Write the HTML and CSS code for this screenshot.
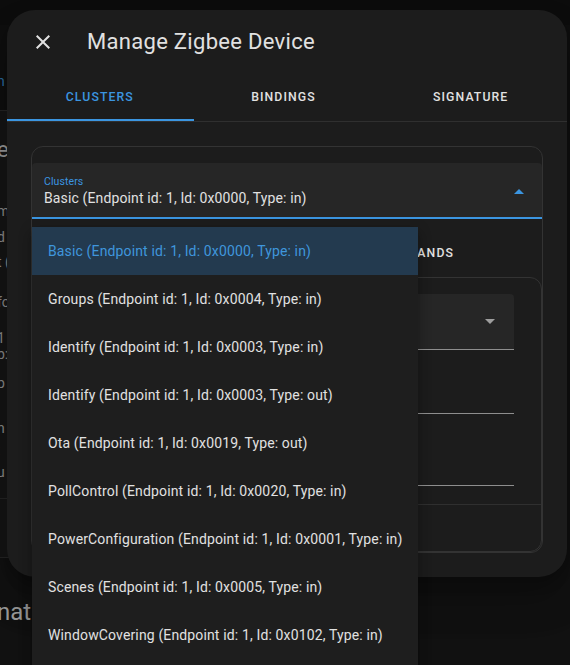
FILE: index.html
```html
<!DOCTYPE html>
<html lang="en">
<head>
<meta charset="utf-8">
<title>Manage Zigbee Device</title>
<link rel="stylesheet" href="styles.css">
</head>
<body>
<div class="page">
  <div class="page-top"></div>
  <div class="page-sub"><span class="page-link">n</span></div>
  <div class="page-col">
    <div class="page-card">
      <div class="pc-head">e</div>
      <div class="pc-lines">
        <div class="pl">m</div>
        <div class="pl">d</div>
        <div class="pl">t (</div>
        <div class="pl">fo</div>
        <div class="pl">1</div>
        <div class="pl">b:</div>
        <div class="pl">p</div>
        <div class="pl">n</div>
        <div class="pl">:</div>
        <div class="pl">u</div>
      </div>
      <div class="pc-actions"><span class="page-link">l</span></div>
    </div>
    <div class="page-heading">nati</div>
  </div>
</div>

<div class="dialog">
  <div class="dlg-header">
    <svg class="close-icon" viewBox="0 0 24 24" width="24" height="24"><path d="M19,6.41L17.59,5L12,10.59L6.41,5L5,6.41L10.59,12L5,17.59L6.41,19L12,13.41L17.59,19L19,17.59L13.41,12L19,6.41Z"/></svg>
    <h2 class="dlg-title">Manage Zigbee Device</h2>
  </div>
  <div class="tabs">
    <div class="tab active">Clusters</div>
    <div class="tab">Bindings</div>
    <div class="tab">Signature</div>
  </div>
  <div class="dlg-content">
    <div class="card">
      <div class="select open">
        <div class="sel-text">
          <div class="sel-label">Clusters</div>
          <div class="sel-value">Basic (Endpoint id: 1, Id: 0x0000, Type: in)</div>
        </div>
        <svg class="sel-arrow" viewBox="0 0 10 5" width="10" height="5"><path d="M0 5 L5 0 L10 5 Z"/></svg>
      </div>
      <div class="subtabs">
        <div class="subtab active">Attributes</div>
        <div class="subtab">Commands</div>
      </div>
      <div class="inner-card">
        <div class="ic-body">
          <div class="ic-select">
            <svg class="ic-arrow" viewBox="0 0 10 5" width="10" height="5"><path d="M0 0 L5 5 L10 0 Z"/></svg>
          </div>
          <div class="ic-field ic-field-a"></div>
          <div class="ic-field ic-field-b"></div>
        </div>
        <div class="ic-actions"></div>
      </div>
    </div>
  </div>
</div>

<div class="menu">
  <div class="menu-item selected">Basic (Endpoint id: 1, Id: 0x0000, Type: in)</div>
  <div class="menu-item">Groups (Endpoint id: 1, Id: 0x0004, Type: in)</div>
  <div class="menu-item">Identify (Endpoint id: 1, Id: 0x0003, Type: in)</div>
  <div class="menu-item">Identify (Endpoint id: 1, Id: 0x0003, Type: out)</div>
  <div class="menu-item">Ota (Endpoint id: 1, Id: 0x0019, Type: out)</div>
  <div class="menu-item">PollControl (Endpoint id: 1, Id: 0x0020, Type: in)</div>
  <div class="menu-item">PowerConfiguration (Endpoint id: 1, Id: 0x0001, Type: in)</div>
  <div class="menu-item">Scenes (Endpoint id: 1, Id: 0x0005, Type: in)</div>
  <div class="menu-item">WindowCovering (Endpoint id: 1, Id: 0x0102, Type: in)</div>
</div>
</body>
</html>
```

FILE: styles.css
```css
* { box-sizing: border-box; margin: 0; padding: 0; }

html, body {
  width: 570px;
  height: 665px;
  overflow: hidden;
}

body {
  position: relative;
  background: #111111;
  font-family: Roboto, "Noto Sans", "Liberation Sans", sans-serif;
  color: #e1e1e1;
}

/* ---------- underlying page (dimmed by scrim) ---------- */
.page {
  width: 570px;
  height: 665px;
  color: #8c8c8c;
  font-size: 14px;
}

.page-top {
  height: 25px;
  background: #0d0d0d;
}

.page-sub {
  height: 85px;
  padding-top: 48px;
  line-height: 16px;
  background: #0f0f0f;
  margin-left: -3px;
}

.page-link { color: #2b6ca4; }

.page-col {
  margin-left: -3px;
  width: 200px;
}

.page-card {
  background: #161616;
  border-top: 1px solid #262626;
  border-bottom: 1px solid #262626;
}

.pc-head {
  padding-top: 25px;
  font-size: 22px;
  line-height: 28px;
  color: #9a9a9a;
}

.pc-lines {
  margin-top: 39px;
  display: flex;
  flex-direction: column;
}

.pl { height: 16px; line-height: 16px; }
.pl:nth-child(2) { margin-top: 10px; }
.pl:nth-child(3) { margin-top: 9px; }
.pl:nth-child(4) { margin-top: 24px; }
.pl:nth-child(5) { margin-top: 20px; }
.pl:nth-child(6) { margin-top: 0; }
.pl:nth-child(7) { margin-top: 13px; }
.pl:nth-child(8) { margin-top: 29px; }
.pl:nth-child(9) { margin-top: 6px; }
.pl:nth-child(10) { margin-top: 6px; }

.pc-actions {
  margin-top: 18px;
  border-top: 1px solid #262626;
  height: 59px;
  padding-top: 20px;
  line-height: 16px;
}

.page-heading {
  margin-top: 39px;
  font-size: 24px;
  line-height: 30px;
  color: #9a9a9a;
}

/* ---------- dialog ---------- */
.dialog {
  position: absolute;
  left: 7px;
  top: 10px;
  width: 560px;
  height: 567px;
  background: #1c1c1c;
  border-radius: 28px;
  overflow: hidden;
  display: flex;
  flex-direction: column;
  box-shadow: 0 11px 15px -7px rgba(0,0,0,.2), 0 24px 38px 3px rgba(0,0,0,.14), 0 9px 46px 8px rgba(0,0,0,.12);
}

.dlg-header {
  height: 63px;
  flex: none;
  display: flex;
  align-items: center;
  padding-left: 24px;
}

.close-icon {
  fill: #e1e1e1;
  flex: none;
}

.dlg-title {
  margin-left: 32px;
  font-size: 22px;
  font-weight: 400;
  color: #e1e1e1;
  letter-spacing: 0.3px;
}

.tabs {
  display: grid;
  grid-template-columns: repeat(3, 1fr);
  flex: none;
  border-bottom: 1px solid #2f2f2f;
}

.tab {
  height: 48px;
  padding-top: 2px;
  display: flex;
  align-items: center;
  justify-content: center;
  font-size: 12.25px;
  font-weight: 500;
  letter-spacing: 1.1px;
  text-transform: uppercase;
  color: #e1e1e1;
  border-bottom: 2px solid transparent;
}

.tab:nth-child(1) { padding-right: 1px; }
.tab:nth-child(2) { padding-right: 7px; }
.tab:nth-child(3) { padding-right: 6px; }

.tab.active {
  color: #3b95e0;
  border-bottom-color: #3b95e0;
}

.dlg-content {
  padding: 24px;
}

.card {
  border: 1px solid #333333;
  border-radius: 12px;
  padding-top: 16px;
}

.select {
  height: 56px;
  background: #262626;
  border-radius: 4px 4px 0 0;
  border-bottom: 2px solid #3b95e0;
  padding: 12px 18px 0 12px;
  display: flex;
  justify-content: space-between;
}

.sel-label {
  font-size: 10.5px;
  line-height: 14px;
  color: #3b95e0;
  letter-spacing: 0.1px;
}

.sel-value {
  font-size: 14px;
  line-height: 18px;
  color: #e1e1e1;
  letter-spacing: 0.13px;
}

.sel-arrow {
  fill: #3b95e0;
  margin-top: 14px;
}

.subtabs {
  display: grid;
  grid-template-columns: repeat(2, 1fr);
  padding-top: 10px;
}

.subtab {
  height: 48px;
  padding-top: 2px;
  display: flex;
  align-items: center;
  justify-content: center;
  font-size: 12.25px;
  font-weight: 500;
  letter-spacing: 1.1px;
  text-transform: uppercase;
  color: #e1e1e1;
  border-bottom: 2px solid transparent;
}

.subtab.active {
  color: #3b95e0;
  border-bottom-color: #3b95e0;
}

.inner-card {
  border: 1px solid #333333;
  border-radius: 12px;
}

.ic-body {
  padding: 16px 27px 0 28px;
}

.ic-select {
  height: 56px;
  background: #262626;
  border-radius: 4px 4px 0 0;
  border-bottom: 1px solid #8e8e8e;
  padding: 0 19px 0 12px;
  display: flex;
  align-items: center;
  justify-content: flex-end;
}

.ic-arrow { fill: #9e9e9e; }

.ic-field {
  border-bottom: 1px solid #8e8e8e;
}

.ic-field-a { height: 64px; }
.ic-field-b { height: 72px; margin-bottom: 18px; }

.ic-actions {
  border-top: 1px solid #2f2f2f;
  height: 47px;
}

/* ---------- open dropdown menu ---------- */
.menu {
  position: absolute;
  left: 32px;
  top: 227px;
  width: 386px;
  height: 460px;
  background: #1e1e1e;
  box-shadow: 0 5px 5px -3px rgba(0,0,0,.2), 0 8px 10px 1px rgba(0,0,0,.14), 0 3px 14px 2px rgba(0,0,0,.12);
  border-radius: 4px 4px 0 0;
}

.menu-item {
  height: 48px;
  padding: 0 16px;
  display: flex;
  align-items: center;
  font-size: 14px;
  letter-spacing: 0.14px;
  color: #e1e1e1;
  white-space: nowrap;
}

.menu-item.selected {
  background: #233a4f;
  color: #3f96dc;
}
```
